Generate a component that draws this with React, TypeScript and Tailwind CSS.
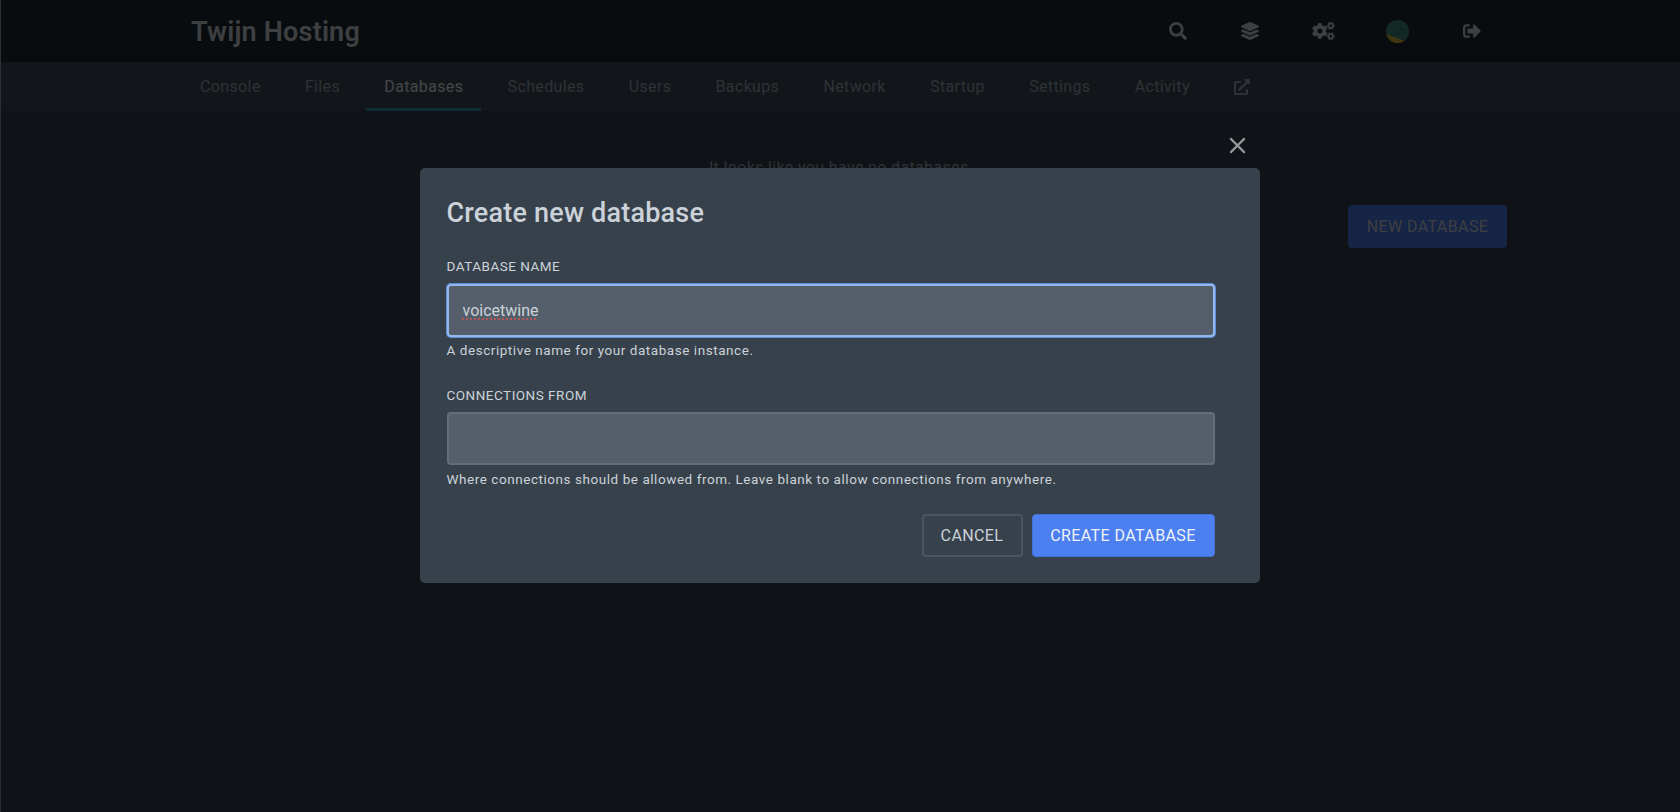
import React from 'react';
import { FaSearch, FaLayerGroup, FaCogs, FaSignOutAlt, FaExternalLinkAlt } from 'react-icons/fa';

const tabs = ['Console', 'Files', 'Databases', 'Schedules', 'Users', 'Backups', 'Network', 'Startup', 'Settings', 'Activity'];

function Avatar() {
  return (
    <svg viewBox="0 0 36 36" className="w-[23px] h-[23px]">
      <mask id="av">
        <circle cx="18" cy="18" r="18" fill="#fff" />
      </mask>
      <g mask="url(#av)">
        <rect width="36" height="36" fill="#d9b23a" />
        <rect x="-2" y="-14" width="48" height="36" fill="#3f8a80" transform="rotate(20 18 18) translate(0 6)" />
        <circle cx="14" cy="15" r="1" fill="#111" />
        <circle cx="24" cy="15" r="1" fill="#111" />
        <path d="M15 21c2 1.4 4 1.4 6 0" stroke="#111" fill="none" strokeWidth="1" />
      </g>
    </svg>
  );
}

function Field({ label, help, focused, value }: { label: string; help: string; focused?: boolean; value?: string }) {
  return (
    <div>
      <div className="text-[13.5px] leading-[18px] tracking-[0.5px] text-[#cbd2d9]">{label}</div>
      <div
        className={
          focused
            ? 'mt-[9px] mb-[4px] h-[53px] rounded-[4px] bg-[#545f6b] border-2 border-[#93b8ec] ring-1 ring-[#5f8fdc] flex items-center px-[14px]'
            : 'mt-[8px] mb-[5px] h-[53px] rounded-[4px] bg-[#545f6b] border-2 border-[#636e7a] flex items-center px-[14px]'
        }
      >
        <span className="text-[16px] text-[#cbd2d9] underline decoration-dotted decoration-[#d9534f] underline-offset-[3px]">{value}</span>
      </div>
      <div className="text-[13.5px] leading-[18px] tracking-[0.55px] text-[#cbd2d9]">{help}</div>
    </div>
  );
}

export default function App() {
  return (
    <div className="relative h-[812px] overflow-hidden bg-[#323f4b] border-l border-[#2c2f33] font-['Roboto',sans-serif]">
      <header className="h-[62px] bg-[#1f2933] flex items-center pl-[190px]">
        <div className="text-[27px] font-semibold text-[#cbd2d9] tracking-[0.2px] w-[951px] pt-[2px]">Twijn Hosting</div>
        <div className="flex items-center text-[#cbd2d9]">
          <div className="w-[72px] flex justify-center"><FaSearch className="w-[18px] h-[18px]" /></div>
          <div className="w-[72px] flex justify-center"><FaLayerGroup className="w-[18px] h-[18px]" /></div>
          <div className="w-[74px] flex justify-center"><FaCogs className="w-[23px] h-[18px]" /></div>
          <div className="w-[75px] flex justify-center"><Avatar /></div>
          <div className="w-[74px] flex justify-center"><FaSignOutAlt className="w-[18px] h-[18px]" /></div>
        </div>
      </header>
      <nav className="h-[49px] bg-[#3e4c59] flex items-stretch pl-[181px] gap-[8.3px]">
        {tabs.map((t) => (
          <div
            key={t}
            className={
              t === 'Databases'
                ? 'px-[18px] flex items-center text-[16px] tracking-[0.35px] text-[#e4e7eb] border-b-[3px] border-[#3a98b0] pt-[3px]'
                : 'px-[18px] flex items-center text-[16px] tracking-[0.35px] text-[#9aa5b1] border-b-[3px] border-transparent pt-[3px]'
            }
          >
            {t}
          </div>
        ))}
        <div className="px-[18px] flex items-center text-[#9aa5b1]"><FaExternalLinkAlt className="w-[16px] h-[16px]" /></div>
      </nav>
      <main className="flex pl-[189px] pr-[173px]">
        <div className="flex-1 pt-[45px] text-center text-[16px] tracking-[0.35px] text-[#9aa5b1] pl-[144px]">It looks like you have no databases.</div>
        <div className="pt-[94px]">
          <button className="w-[159px] h-[43px] rounded-[4px] bg-[#4b7bec] text-[#cbd2d9] text-[16px] tracking-[0.4px]">NEW DATABASE</button>
        </div>
      </main>

      <div className="absolute inset-0 bg-black/70 flex justify-center pt-[168px] pr-[2px]">
        <div className="relative h-[415px] w-[840px] rounded-[5px] bg-[#37414b] pl-[27px] pr-[45px] pt-[28px]">
          <svg viewBox="0 0 18 18" className="absolute -top-[31px] right-[14px] w-[17px] h-[17px] text-[#94979b]" fill="none" stroke="currentColor" strokeWidth="2.3" strokeLinecap="round">
            <path d="M2 2l14 14M16 2L2 16" />
          </svg>
          <h2 className="text-[27px] leading-[34px] font-medium tracking-[0.2px] text-[#cbd2d9] mb-[27px]">Create new database</h2>
          <Field label="DATABASE NAME" help="A descriptive name for your database instance." focused value="voicetwine" />
          <div className="h-[27px]" />
          <Field label="CONNECTIONS FROM" help="Where connections should be allowed from. Leave blank to allow connections from anywhere." />
          <div className="flex justify-end gap-[9px] mt-[26px]">
            <button className="w-[101px] h-[43px] rounded-[4px] border-2 border-[#4a5560] text-[#cbd2d9] text-[16px] tracking-[0.4px]">CANCEL</button>
            <button className="w-[183px] h-[43px] rounded-[4px] bg-[#4c7fef] border border-[#4472d8] text-[#eef2f7] text-[16px] tracking-[0.4px]">CREATE DATABASE</button>
          </div>
        </div>
      </div>
    </div>
  );
}
